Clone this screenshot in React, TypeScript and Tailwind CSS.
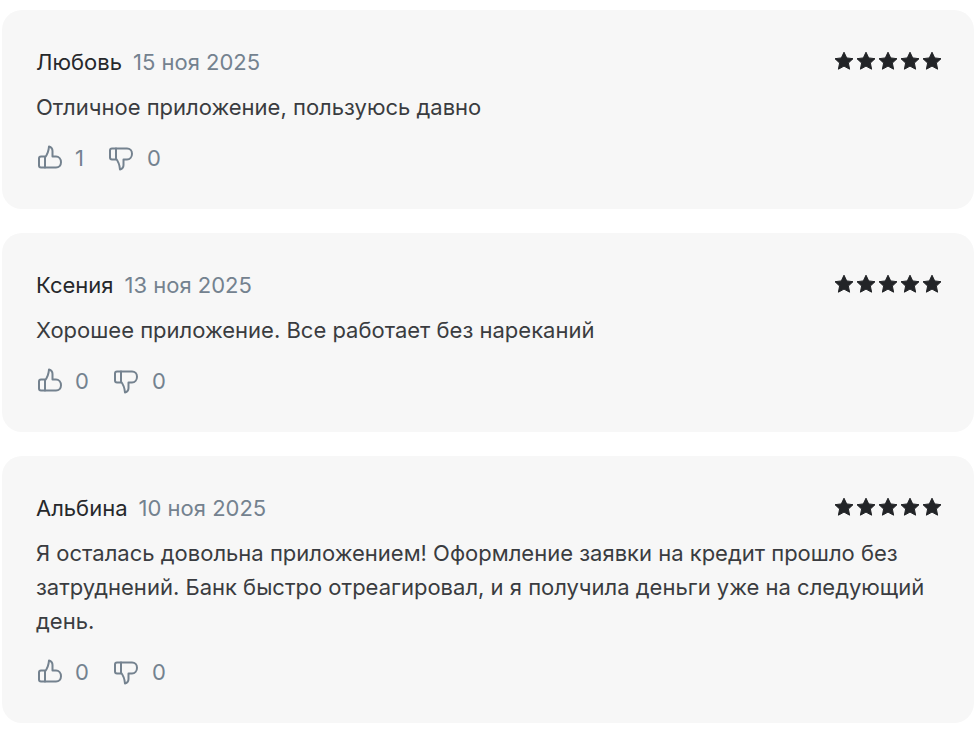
import React from 'react';

type Review = { name: string; date: string; text: string; likes: number; dislikes: number };

const reviews: Review[] = [
  { name: 'Любовь', date: '15 ноя 2025', text: 'Отличное приложение, пользуюсь давно', likes: 1, dislikes: 0 },
  { name: 'Ксения', date: '13 ноя 2025', text: 'Хорошее приложение. Все работает без нареканий', likes: 0, dislikes: 0 },
  {
    name: 'Альбина',
    date: '10 ноя 2025',
    text: 'Я осталась довольна приложением! Оформление заявки на кредит прошло без затруднений. Банк быстро отреагировал, и я получила деньги уже на следующий день.',
    likes: 0,
    dislikes: 0,
  },
];

const Star = () => (
  <svg width="20" height="20" viewBox="0 0 20 20" className="text-[#222427]">
    <path
      d="M10 1.2l2.7 5.7 6.3.8-4.6 4.3 1.2 6.2L10 15.1l-5.6 3.1 1.2-6.2L1 7.7l6.3-.8z"
      fill="currentColor"
      stroke="currentColor"
      strokeWidth="1"
      strokeLinejoin="round"
    />
  </svg>
);

const Thumb = ({ down = false }: { down?: boolean }) => (
  <svg
    width="28"
    height="28"
    viewBox="0 0 28 28"
    fill="none"
    stroke="#74828f"
    strokeWidth="2"
    strokeLinejoin="round"
    strokeLinecap="round"
    className={down ? '-scale-y-100' : ''}
  >
    <path d="M9 12.5H5a2 2 0 0 0-2 2v7a2 2 0 0 0 2 2h4" />
    <path d="M9 13.5v10h11c3 0 5-2.300 5-5.200 0-3.300-2.200-5.800-5-5.800h-3.500V7c0-2.300-1.500-4-3.500-4.500-.3 4-1.500 7.800-4 11z" />
  </svg>
);

const ReviewCard = ({ review }: { review: Review }) => (
  <div className="rounded-[20px] bg-[#f7f7f7] pl-[34px] pr-[32px] pt-[37px] pb-[36px]">
    <div className="flex items-center justify-between h-[30px]">
      <div className="flex items-baseline gap-[11px] text-[22px] leading-[30px]">
        <span className="text-[#26282b]">{review.name}</span>
        <span className="text-[#74828f]">{review.date}</span>
      </div>
      <div className="flex gap-[2px] -mt-[2px]">
        {[1, 2, 3, 4, 5].map(i => (
          <Star key={i} />
        ))}
      </div>
    </div>
    <p className="mt-[13px] text-[22px] leading-[34px] text-[#3a3c40]">{review.text}</p>
    <div className="mt-[19px] flex items-center h-[30px] text-[22px] text-[#74828f]">
      <Thumb />
      <span className="ml-[11px] mt-[1px]">{review.likes}</span>
      <span className="ml-[23px]">
        <Thumb down />
      </span>
      <span className="ml-[12px] mt-[1px]">{review.dislikes}</span>
    </div>
  </div>
);

export default function App() {
  return (
    <div
      className="h-[736px] w-[974px] overflow-hidden bg-white pl-[2px] pt-[10px] flex flex-col gap-[24px]"
      style={{ fontFamily: 'Inter, "Noto Sans", sans-serif' }}
    >
      {reviews.map(r => (
        <ReviewCard key={r.name} review={r} />
      ))}
    </div>
  );
}
